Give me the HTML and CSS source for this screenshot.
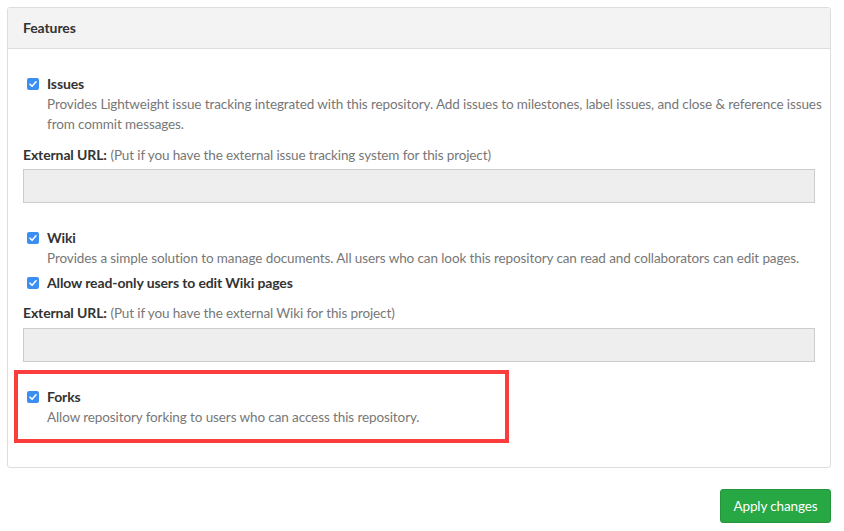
FILE: index.html
```html
<!DOCTYPE html>
<html lang="en">
<head>
<meta charset="utf-8">
<title>Features</title>
<link rel="stylesheet" href="styles.css">
</head>
<body>
<div class="page">
  <div class="panel">
    <div class="panel-heading">Features</div>
    <div class="panel-body">
      <div class="option">
        <label class="check"><span class="box"><svg viewBox="0 0 12 12" width="12" height="12"><path d="M3 6.2 L5.1 8.3 L9 3.8" fill="none" stroke="#fff" stroke-width="1.6" stroke-linecap="round" stroke-linejoin="round"/></svg></span><span class="title">Issues</span></label>
        <p class="help">Provides Lightweight issue tracking integrated with this repository. Add issues to milestones, label issues, and close &amp; reference issues from commit messages.</p>
      </div>
      <div class="field">
        <div class="field-label"><strong>External URL:</strong> <span class="note">(Put if you have the external issue tracking system for this project)</span></div>
        <div class="input"></div>
      </div>

      <div class="option section">
        <label class="check"><span class="box"><svg viewBox="0 0 12 12" width="12" height="12"><path d="M3 6.2 L5.1 8.3 L9 3.8" fill="none" stroke="#fff" stroke-width="1.6" stroke-linecap="round" stroke-linejoin="round"/></svg></span><span class="title">Wiki</span></label>
        <p class="help">Provides a simple solution to manage documents. All users who can look this repository can read and collaborators can edit pages.</p>
      </div>
      <div class="option sub">
        <label class="check"><span class="box"><svg viewBox="0 0 12 12" width="12" height="12"><path d="M3 6.2 L5.1 8.3 L9 3.8" fill="none" stroke="#fff" stroke-width="1.6" stroke-linecap="round" stroke-linejoin="round"/></svg></span><span class="title">Allow read-only users to edit Wiki pages</span></label>
      </div>
      <div class="field field-tight">
        <div class="field-label"><strong>External URL:</strong> <span class="note">(Put if you have the external Wiki for this project)</span></div>
        <div class="input"></div>
      </div>

      <div class="highlight">
        <div class="option">
          <label class="check"><span class="box"><svg viewBox="0 0 12 12" width="12" height="12"><path d="M3 6.2 L5.1 8.3 L9 3.8" fill="none" stroke="#fff" stroke-width="1.6" stroke-linecap="round" stroke-linejoin="round"/></svg></span><span class="title">Forks</span></label>
          <p class="help">Allow repository forking to users who can access this repository.</p>
        </div>
      </div>
    </div>
  </div>
  <div class="actions">
    <button class="btn-apply" type="button">Apply changes</button>
  </div>
</div>
</body>
</html>
```
FILE: styles.css
```css
* { box-sizing: border-box; }
html, body { margin: 0; padding: 0; background: #fff; }
body {
  font-family: "Lato", "Noto Sans", sans-serif;
  font-size: 14px;
  line-height: 20px;
  color: #333;
}
.page {
  padding: 7px 0 0 7px;
  width: 831px;
}
.panel {
  border: 1px solid #ddd;
  border-radius: 3px;
  background: #fff;
}
.panel-heading {
  background: #f3f3f3;
  border-bottom: 1px solid #ddd;
  height: 41px;
  padding: 10px 15px 10px 15px;
  font-weight: 700;
  letter-spacing: -0.1px;
  color: #333;
  border-radius: 3px 3px 0 0;
}
.panel-body {
  padding: 25px 15px 24px 15px;
}
.option { margin: 0; }
.check {
  display: flex;
  align-items: center;
  height: 20px;
}
.box {
  width: 12px;
  height: 12px;
  margin-left: 4px;
  margin-right: 8px;
  border-radius: 2px;
  background: #3b8ef2;
  display: inline-flex;
  align-items: center;
  justify-content: center;
  flex: none;
}
.box svg { display: block; }
.title { font-weight: 700; color: #333; letter-spacing: -0.12px; }
.help {
  margin: 0 -14px 0 0;
  padding-left: 24px;
  color: #777;
  font-size: 13.5px;
  letter-spacing: -0.1px;
}
.field { margin-top: 11px; }
.field-tight { margin-top: 10px; }
.field-label { color: #777; }
.field-label strong { color: #333; font-weight: 700; letter-spacing: -0.12px; }
.note { font-size: 13.5px; letter-spacing: -0.12px; }
.input {
  margin-top: 4px;
  height: 34px;
  background: #eee;
  border: 1px solid #ccc;
}
.field-tight .input { margin-top: 5px; }
.section { margin-top: 25px; }
.sub { margin-top: 5px; }
.highlight {
  margin-top: 8px;
  margin-left: -9px;
  width: 495px;
  border: 4px solid #fb3d3d;
  padding: 13px 0 12px 5px;
}
.highlight .help { margin-right: 0; }
.actions {
  display: flex;
  justify-content: flex-end;
  margin-top: 21px;
}
.btn-apply {
  font-family: inherit;
  font-size: 13.5px;
  letter-spacing: -0.12px;
  line-height: 20px;
  height: 34px;
  width: 111px;
  padding: 0;
  color: #fff;
  background: #28a745;
  border: 1px solid #23963d;
  border-radius: 3px;
}
```
